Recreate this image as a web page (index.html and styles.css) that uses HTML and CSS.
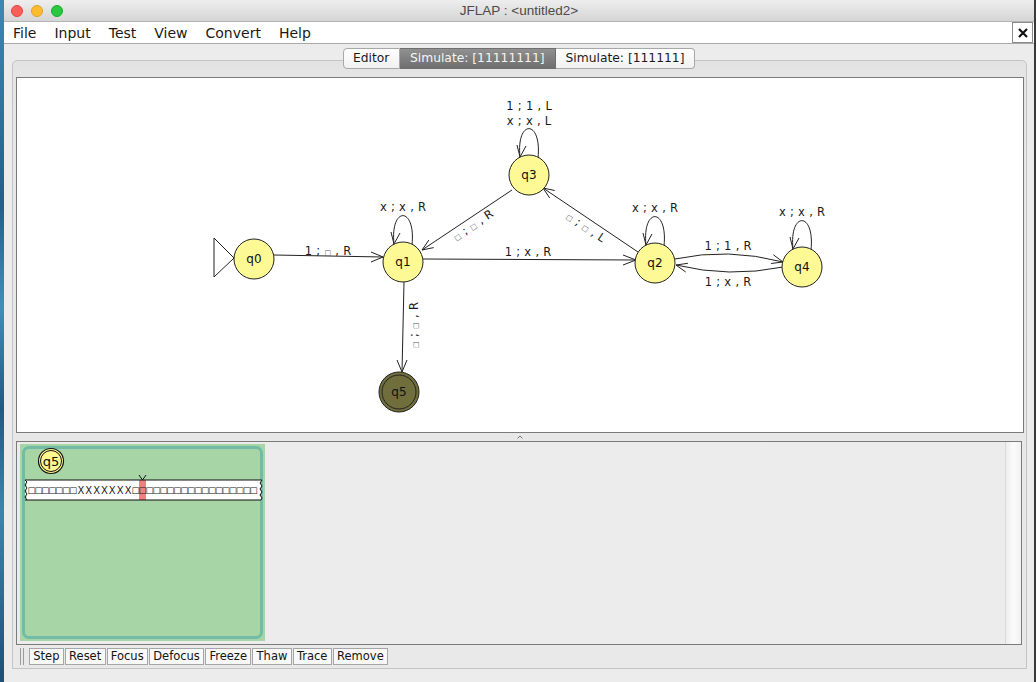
FILE: index.html
```html
<!DOCTYPE html>
<html>
<head>
<meta charset="utf-8">
<title>JFLAP</title>
<link rel="stylesheet" href="styles.css">
</head>
<body>
<div class="screen">
  <div class="desk-left"></div>
  <div class="window">
    <div class="titlebar">
      <div class="lights"><span class="light red"></span><span class="light yellow"></span><span class="light green"></span></div>
      <div class="title">JFLAP : &lt;untitled2&gt;</div>
      <div></div>
    </div>
    <div class="menubar">
      <nav class="menus"><span>File</span><span>Input</span><span>Test</span><span>View</span><span>Convert</span><span>Help</span></nav>
      <div class="close"><svg width="12" height="12" viewBox="0 0 12 12"><path d="M2 2 L10 10 M10 2 L2 10" stroke="#111" stroke-width="2.2" fill="none"/></svg></div>
    </div>
    <div class="content">
      <div class="tabs">
        <span class="tab">Editor</span><span class="tab active">Simulate: [11111111]</span><span class="tab">Simulate: [111111]</span>
      </div>
      <div class="tabpanel">
        <div class="canvas">
          <svg class="graph" width="1006" height="354" viewBox="17 78 1006 354">
            <g stroke="#222" fill="none" stroke-width="1">
              <path d="M274 255 L383 257"/><path d="M371 252 L383 257 L371 262"/>
              <path d="M423 259 L636 260"/><path d="M623 255 L636 260 L623 265"/>
              <path d="M512 190 L422 250"/><path d="M428.8 240.1 L422 250 L433.7 247.6"/>
              <path d="M638 252 L543 188"/><path d="M549.7 198 L543 188 L554.7 190.5"/>
              <path d="M404 282 L402 372"/><path d="M397 360 L402 372 L407 360"/>
              <path d="M675 259 Q728 247.5 783 262"/><path d="M773.4 254.8 L783 262 L771.1 263.5"/>
              <path d="M783 267 Q729 278 676 265"/><path d="M685.7 272 L676 265 L687.9 263.3"/>
              <path d="M412 245 C416 206 390 206 394 244"/><path d="M391 232 L394 244 L400 233"/>
              <path d="M538 158 C542 119 516 119 520 157"/><path d="M517 145 L520 157 L526 146"/>
              <path d="M664 246 C668 207 642 207 646 245"/><path d="M643 233 L646 245 L652 234"/>
              <path d="M811 250 C815 211 789 211 793 249"/><path d="M790 237 L793 249 L799 238"/>
            </g>
            <polygon points="214,238 234,258 214,277" fill="#fff" stroke="#222"/>
            <g stroke="#222" stroke-width="1" fill="#fdfa96">
              <circle cx="254" cy="259" r="20"/>
              <circle cx="403" cy="262" r="20"/>
              <circle cx="655" cy="263" r="20"/>
              <circle cx="529" cy="175" r="20"/>
              <circle cx="802" cy="267" r="20"/>
              <circle cx="399" cy="392" r="20" fill="#6f6e3c"/>
              <circle cx="399" cy="392" r="17" fill="#6f6e3c"/>
            </g>
            <g class="nodetext" text-anchor="middle">
              <text x="254" y="263">q0</text>
              <text x="403" y="266">q1</text>
              <text x="655" y="267">q2</text>
              <text x="529" y="179">q3</text>
              <text x="802" y="271">q4</text>
              <text x="399" y="396" fill="#1d1d10">q5</text>
            </g>
            <g class="lbl" text-anchor="middle">
              <text x="328" y="255">1 ; <tspan class="blank">□</tspan> , R</text>
              <text x="528" y="256">1 ; x , R</text>
              <text x="403" y="211">x ; x , R</text>
              <text x="655" y="212">x ; x , R</text>
              <text x="802" y="216">x ; x , R</text>
              <text x="529" y="110">1 ; 1 , L</text>
              <text x="529" y="125">x ; x , L</text>
              <text x="728" y="250">1 ; 1 , R</text>
              <text x="728" y="286">1 ; x , R</text>
              <text x="473" y="229" transform="rotate(-33.7 473 225)"><tspan class="blank">□</tspan> ; <tspan class="blank">□</tspan> , R</text>
              <text x="586" y="231" transform="rotate(34 586 227)"><tspan class="blank">□</tspan> ; <tspan class="blank">□</tspan> , L</text>
              <text x="414" y="329" transform="rotate(-90 414 325)"><tspan class="blank">□</tspan> ; <tspan class="blank">□</tspan> , R</text>
            </g>
          </svg>
        </div>
        <div class="divider"><svg width="6" height="4" viewBox="0 0 6 4"><path d="M0.5 3.5 L3 1 L5.5 3.5" stroke="#777" fill="none"/></svg></div>
        <div class="simpanel">
          <div class="config">
            <div class="config-inner">
              <svg class="tape" width="235" height="187" viewBox="25 449 235 187">
                <circle cx="51" cy="461" r="12.5" fill="#fdf78e" stroke="#111" stroke-width="1.2"/>
                <circle cx="51" cy="461" r="10.5" fill="none" stroke="#111" stroke-width="1"/>
                <text x="51" y="466" text-anchor="middle" class="mini">q5</text>
                <path d="M25 480 L262 480 L260 483 L262 486 L260 489 L262 492 L260 495 L262 498 L261 500 L25 500 L27 497 L25 494 L27 491 L25 488 L27 485 L25 482 Z" fill="#fff" stroke="none"/>
                <rect x="139" y="480" width="7" height="20" fill="#f08080"/>
                <path d="M25 480 L262 480 M25 500 L261 500" stroke="#111" stroke-width="1.2" fill="none"/>
                <path d="M25 480 L27 482 L25 485 L27 488 L25 491 L27 494 L25 497 L27 500 M262 480 L260 483 L262 486 L260 489 L262 492 L260 495 L262 498 L261 500" stroke="#111" stroke-width="1" fill="none"/>
                <path d="M139 475 L142.5 480 L146 475" stroke="#111" stroke-width="1" fill="none"/>
                <text class="cells" text-anchor="middle" y="493"><tspan class="tsq" x="31.5 38.4 45.3 52.2 59.1 66 72.9">□□□□□□□</tspan><tspan class="tx" y="494" x="80.9 88.8 96.6 104.5 112.3 120.2 128.1">XXXXXXX</tspan><tspan class="tsq" y="493" x="135.5 142.5 149.5 156.4 163.4 170.3 177.3 184.2 191.1 198.1 205 212 218.9 225.8 232.8 239.7 246.7 253.6">□□□□□□□□□□□□□□□□□□</tspan></text>
              </svg>
            </div>
          </div>
          <div class="simfill"></div>
          <div class="vtrack"></div>
        </div>
        <div class="toolbar">
          <span class="grip"></span>
          <span class="btn">Step</span><span class="btn">Reset</span><span class="btn">Focus</span><span class="btn">Defocus</span><span class="btn">Freeze</span><span class="btn">Thaw</span><span class="btn">Trace</span><span class="btn">Remove</span>
        </div>
      </div>
    </div>
  </div>
  <div class="desk-right"></div>
</div>
</body>
</html>
```

FILE: styles.css
```css
html, body {
  margin: 0;
  padding: 0;
}
body {
  width: 1036px;
  height: 682px;
  overflow: hidden;
  font-family: "DejaVu Sans", sans-serif;
  background: #3b3b3b;
}
.screen {
  display: flex;
  height: 682px;
}
.desk-left {
  width: 4px;
  background: linear-gradient(#3d88b3, #215f8c 30%, #3f8fba 45%, #1f5a84 60%, #3b86b0 75%, #1d4f78);
}
.desk-right {
  width: 2px;
  background: #3a3a3a;
}
.window {
  width: 1030px;
  display: flex;
  flex-direction: column;
  background: #ececec;
}
.titlebar {
  height: 21px;
  border-bottom: 1px solid #b3b3b3;
  background: linear-gradient(#eeeeee, #d5d5d5);
  display: grid;
  grid-template-columns: 1fr auto 1fr;
  align-items: center;
}
.lights {
  display: flex;
  gap: 8px;
  padding-left: 7px;
}
.light {
  width: 12px;
  height: 12px;
  border-radius: 50%;
  box-sizing: border-box;
}
.red { background: #fc5f57; border: 1px solid #e0443e; }
.yellow { background: #fdbc2e; border: 1px solid #dea123; }
.green { background: #28c840; border: 1px solid #1aab29; }
.title {
  font-family: "Liberation Sans", sans-serif;
  font-size: 13.5px;
  color: #4b4b4b;
}
.menubar {
  height: 21px;
  background: #fff;
  border-bottom: 1px solid #a9a9a9;
  display: flex;
  align-items: center;
  justify-content: space-between;
}
.menus {
  display: flex;
  gap: 18px;
  padding-left: 9px;
  font-size: 14px;
  color: #1a1a1a;
}
.close {
  width: 19px;
  height: 19px;
  border: 1px solid #8a8a8a;
  margin-right: 1px;
  display: flex;
  align-items: center;
  justify-content: center;
  background: #fff;
}
.content {
  flex: 1;
  display: flex;
  flex-direction: column;
}
.tabs {
  display: flex;
  justify-content: center;
  margin-top: 4px;
  position: relative;
  z-index: 1;
}
.tab {
  height: 19px;
  line-height: 19px;
  border: 1px solid #a8a8a8;
  border-left: none;
  padding: 0 10px;
  font-size: 12.3px;
  color: #1c1c1c;
  background: linear-gradient(#ffffff, #f1f1f1);
}
.tab:first-child {
  border-left: 1px solid #a8a8a8;
  border-radius: 4px 0 0 4px;
  padding: 0 9.5px;
}
.tab:last-child {
  border-radius: 0 4px 4px 0;
}
.tab.active {
  background: linear-gradient(#909090, #6f6f6f);
  color: #f4f4f4;
  border-color: #6f6f6f;
}
.tabpanel {
  margin: -9px 7px 0 8px;
  border: 1px solid #c4c4c4;
  border-radius: 5px 5px 0 0;
  background: linear-gradient(#e2e2e2, #e6e6e6 17px, #e9e9e9);
  padding: 16px 2px 0 3px;
}
.canvas {
  height: 354px;
  border: 1px solid #7b7b7b;
  background: #fff;
}
.graph {
  display: block;
}
.nodetext text {
  font-family: "DejaVu Sans", sans-serif;
  font-size: 12px;
  fill: #111;
}
.lbl text {
  font-family: "DejaVu Sans", sans-serif;
  font-size: 11.5px;
  word-spacing: 0.6px;
  fill: #1a1a1a;
}
.blank {
  font-size: 7px;
  fill: #555;
}
.divider {
  height: 8px;
  display: flex;
  justify-content: center;
  align-items: center;
}
.divider svg {
  display: block;
}
.simpanel {
  height: 202px;
  border: 1px solid #7b7b7b;
  margin-right: 2px;
  display: flex;
  background: #ececec;
}
.config {
  width: 245px;
  height: 197px;
  margin: 2px 0 0 3px;
  box-sizing: border-box;
  padding: 2px;
  background: #a7d5a6;
}
.config-inner {
  height: 100%;
  box-sizing: border-box;
  border: 3px solid #72bca7;
  border-radius: 7px;
  background: #a7d5a6;
}
.tape {
  display: block;
  overflow: visible;
}
.mini {
  font-family: "DejaVu Sans", sans-serif;
  font-size: 13px;
  fill: #111;
}
.cells {
  font-family: "DejaVu Sans", sans-serif;
}
.tsq {
  font-size: 8.5px;
  fill: #111;
}
.tx {
  font-size: 10px;
  fill: #222;
}
.simfill {
  flex: 1;
}
.vtrack {
  width: 15px;
  border-left: 1px solid #d9d9d9;
  background: linear-gradient(to right, #eeeeee, #fbfbfb 50%, #f1f1f1);
}
.toolbar {
  height: 23px;
  display: flex;
  align-items: center;
  padding-left: 4px;
}
.grip {
  width: 2px;
  height: 17px;
  border-left: 1px solid #9c9c9c;
  border-right: 1px solid #9c9c9c;
  margin-right: 5px;
}
.btn {
  height: 17px;
  box-sizing: border-box;
  border: 1px solid #a6a6a6;
  background: #f8f8f8;
  font-size: 11.5px;
  line-height: 15px;
  padding: 0 3.3px;
  margin-right: 1px;
  color: #151515;
}
```
